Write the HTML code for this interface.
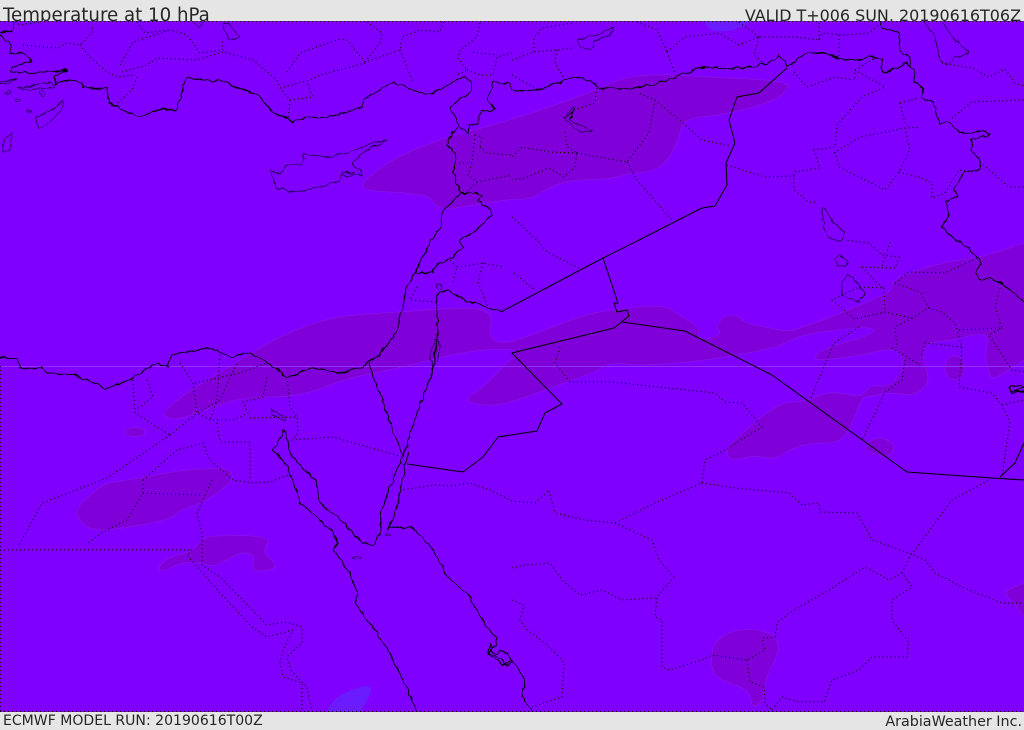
<!DOCTYPE html>
<html><head><meta charset="utf-8"><style>
html,body{margin:0;padding:0;width:1024px;height:729px;overflow:hidden;background:#e5e5e5}
.t{position:absolute;font-family:"DejaVu Sans","Liberation Sans",sans-serif;color:#262626;white-space:nowrap;line-height:1}
svg{position:absolute;left:0;top:0}
.d{fill:#7f00d9;stroke:#8a14e4;stroke-width:.7;stroke-linejoin:round}
.s{fill:none;stroke:#000;stroke-width:1;stroke-linejoin:round}
.h{fill:none;stroke:#1a0040;stroke-width:.7;stroke-linejoin:round}
.o{fill:none;stroke:#000;stroke-width:1.1;stroke-dasharray:1 3}
</style></head><body>
<div style="position:absolute;left:0;top:0;width:1024px;height:21px;overflow:hidden">
<div class="t" style="left:3px;top:7px;font-size:18.2px">Temperature at 10 hPa</div>
<div class="t" style="right:3px;top:8px;font-size:15.95px">VALID T+006 SUN, 20190616T06Z</div>
</div>
<div class="t" style="left:3px;top:714px;font-size:14.05px">ECMWF MODEL RUN: 20190616T00Z</div>
<div class="t" style="right:2px;top:715px;font-size:14.3px">ArabiaWeather Inc.</div>
<svg width="1024" height="729" viewBox="0 0 1024 729">
<defs>
<clipPath id="c"><rect x="0" y="21" width="1024" height="691"/></clipPath>
<filter id="wb" filterUnits="userSpaceOnUse" x="-10" y="0" width="1044" height="740" color-interpolation-filters="sRGB">
<feTurbulence type="fractalNoise" baseFrequency="0.14" numOctaves="2" seed="4" result="n"/>
<feDisplacementMap in="SourceGraphic" in2="n" scale="5" xChannelSelector="R" yChannelSelector="G"/>
</filter>
</defs>
<rect x="0" y="21" width="1024" height="691" fill="#7f00ff"/>
<!-- temperature patches -->
<g clip-path="url(#c)" id="patches">
<path class="d" d="M361 185L372 174 400 155 450 136 512 120 592 92 622 78 655 74 712 77 769 80 785 83 789 87 779 98 752 108 719 115 684 119 679 137 669 160 652 172 629 173 612 179 572 180 549 187 532 199 512 199 473 205 443 210 433 203 430 197 410 193 367 191Z"/>
<path class="d" d="M163 412L187 392 233 365 277 337 333 316 400 312 467 307 487 311 492 318 489 335 497 343 512 342 545 330 589 313 629 308 665 305 679 315 700 328 697 337 707 340 722 334 715 327 725 315 739 316 745 323 765 327 789 332 802 327 829 318 855 307 879 297 892 290 892 282 909 273 945 262 979 258 1024 243 1045 236 1045 347 1024 360 1012 368 992 380 989 373 985 355 989 337 979 333 955 340 925 343 922 357 930 380 922 390 909 396 893 392 865 397 862 398 855 417 842 443 812 443 792 448 775 460 755 455 732 461 725 453 732 442 779 402 805 402 829 391 855 396 864 395 870 385 889 387 902 373 904 355 892 348 862 355 819 361 814 357 822 350 842 343 865 337 878 329 859 327 799 335 779 347 712 360 640 366 612 362 595 372 545 390 512 402 490 406 470 403 467 398 480 390 500 370 517 354 512 348 460 352 400 368 347 378 300 397 240 397 197 413 177 420 165 417Z"/>
<ellipse class="d" cx="955" cy="368" rx="10" ry="12"/>
<path class="d" d="M865 447L870 441 879 437 890 441 895 447 889 457 870 453Z"/>
<ellipse class="d" cx="135" cy="432" rx="10" ry="4.5"/>
<path class="d" d="M75 512L83 501 100 487 110 482 130 480 180 470 227 468 232 473 232 482 203 503 180 510 170 520 100 532 83 525Z"/>
<path class="d" d="M202 537L233 535 272 537 262 552 275 562 275 569 257 572 252 567 255 555 243 552 230 558 213 567 200 562 180 563 163 572 157 568 170 556 192 553Z"/>
<path class="d" d="M711 672L712 647 725 633 752 628 775 635 780 650 765 680 764 700 752 709 750 690 725 682Z"/>
<path class="d" d="M1002 592L1024 583 1045 578 1045 640 1024 618 1015 603Z"/>
<path d="M323 722L333 697 367 684 373 690 362 710 350 722Z" fill="#6a1cff"/>
<path d="M704 10L704 21 709 30 725 32 740 28 752 21 760 10Z" fill="#6a1cff"/>
</g>
<line x1="0" y1="366.5" x2="1024" y2="366.5" stroke="#9230ff" stroke-width="1"/>
<!-- wobbly coasts and natural borders -->
<g filter="url(#wb)" clip-path="url(#c)">
<path class="s" d="M13 21L13 30 4 33 0 33M0 35L10 43 10 53 20 52 32 60 25 63 13 67 12 72 33 73 68 70 55 75 55 85 65 80 82 82 83 87 107 88 108 103 132 115 140 117 163 108 175 112 183 93 183 82 188 78 223 82 257 95 273 112 293 122 302 118 333 116 362 107 363 100 393 82 427 95 440 90 463 76 472 83 470 92 450 107 458 123 459 127 452 132 447 145 455 153 454 173 460 193 450 203 442 213 440 227 432 240 415 272 407 287 397 330 380 355 360 368 338 373 313 367 287 377 272 366 250 352 232 357 210 348 172 354 168 366 160 366 157 363 123 383 107 388 93 382 72 375 47 374 43 367 33 369 20 367 17 359 0 357"/>
<path class="s" d="M459 127L469 133 469 126 478 125 480 112 495 110 488 100 493 81 512 85 512 90 534 91 574 77 589 80 599 88 625 89 652 85 689 72 705 66 725 68 742 68 769 63 779 56 785 60 787 68 805 53 824 53 845 60 859 61 870 56 882 60 880 67 885 73 907 63 909 67"/>
<path class="s" d="M460 193L477 193 483 195 478 200 490 210 492 215 473 233 460 240 462 248 453 257 437 265 433 273 415 272"/>
<path class="s" d="M501 312L465 300 448 290 438 293 437 340 432 373 417 413 403 457 393 480 380 513 380 533 372 545 363 543 337 517 320 503 315 480 292 457 285 430 273 450 288 467 300 502 333 532 337 543 333 550 350 573 358 593 355 602 390 653 417 710"/>
<path class="s" d="M369 363L385 408 403 457M408 453L402 480 397 510 388 530M390 527L413 528 433 550 448 577 467 593 490 632 497 637 495 645 488 653 503 665 512 660 525 680 522 697 532 710"/>
<path class="s" d="M880 21L882 28 899 33 900 50 910 57 909 67 915 70 914 82 924 88 922 98 934 103 939 123 949 123 960 133 977 131 990 133 987 136 972 140 971 150 980 160 980 170 965 172 955 187 957 197 945 202 949 213 942 227 955 240 967 247 982 263 975 272 979 279 992 279 1009 288 1024 302"/>
<path class="h" d="M270 170L277 188 293 192 308 190 338 182 342 173 362 175 353 163 363 152 388 140 373 143 350 152 328 157 304 154 302 165 287 165 280 173Z"/>
<path class="h" d="M342 173L355 172 353 176 342 176ZM37 117L55 108 63 100 62 110 50 122 40 128 36 123ZM3 143L12 132 10 150 3 152ZM18 88L50 82 55 88 22 89ZM0 82L17 78 5 84 0 84ZM222 23L227 23 240 37 230 41ZM193 22L198 28 203 22M577 40L585 38 597 35 614 27 610 35 595 42 590 50 580 47ZM573 107L564 118 580 133 592 130 584 127 570 120 574 112ZM822 208L826 210 832 220 845 232 842 241 828 238 823 225ZM835 260L840 255 849 262 845 267 838 265ZM846 273L842 283 842 295 859 302 865 293 852 277ZM924 22L935 37 939 58 947 65 955 57 969 53 955 40 942 23M435 340L439 341 438 358 433 368 430 360ZM285 430L292 457M271 408L276 412 283 416 285 421 279 417 272 414Z"/>
<circle class="h" cx="439" cy="287" r="3"/><ellipse class="h" cx="8" cy="93" rx="2" ry="1.3"/><ellipse class="h" cx="42" cy="93" rx="2" ry="2.5"/><ellipse class="h" cx="29" cy="111" rx="2.5" ry="1"/><ellipse class="h" cx="18" cy="101" rx="2.5" ry="1.5"/><ellipse class="h" cx="357" cy="558" rx="3" ry="1.3"/><ellipse class="h" cx="388" cy="535" rx="3" ry="1.5"/>
<path class="s" stroke-width=".8" d="M490 644L488 652 502 660 507 666 512 662 508 653 500 650 496 654 491 650ZM1009 387L1020 385 1024 388 1012 391 1024 392 1012 393ZM572 112L566 118M574 110L570 120"/>
</g>
<!-- straight borders -->
<path class="s" d="M787 68L759 93 737 97 729 120 735 143 726 163 727 185 715 206 702 208 639 240 603 258 501 312"/>
<path class="s" d="M407 464L463 472 483 457 498 437 537 431 545 413 562 404 512 353 614 328 629 316 627 310 617 312 614 303 618 303 603 258"/>
<path class="s" d="M622 322L685 331 772 375 907 472 992 478 1024 480M1000 477L1015 463 1024 443"/>
<!-- dotted boundaries -->
<path class="o" d="M15 22L20 25 40 22M23 45L45 47 58 48 67 43 80 45 92 33 93 25M80 45L90 57 107 72 117 77 133 75M120 65L133 42 170 30 187 35 200 53 223 50 222 38M122 72L147 65 157 58 197 60 223 52 253 60 277 80 280 88 290 100 288 120M137 77L132 90 118 103M287 72L300 53 340 39 347 40 365 62 400 50 402 37 420 30 440 32 443 22M280 88L310 80 320 75 365 63M290 100L313 97 307 82M367 22L382 33 380 43 365 62M400 50L413 82M480 23L477 37 460 50 458 58 467 70 457 75M467 70L480 75 493 75 497 57 512 53M473 52L497 55M137 22L145 33 170 30"/>
<path class="o" d="M475 135L472 163 458 163M472 163L468 175 477 182 512 175M477 182L467 192M480 147L487 153 512 155M475 135L482 137 480 147M512 60L534 52 557 50 572 48M534 52L534 38 542 28 572 23M557 50L555 63 565 80M512 75L537 89M597 88L595 103 574 110M565 132L567 147 577 153 575 167 564 177 549 168 525 178 512 180M577 153L627 162 649 133 655 100 639 93M655 100L682 122 702 140 730 146M627 162L637 180 672 220M577 153L549 152 522 147 512 157M512 217L537 240 547 252 579 268M514 273L535 290M450 260L457 267 453 283M457 267L483 263 503 267M483 263L478 282 488 307M417 287L410 300 437 302"/>
<path class="o" d="M667 52L675 73M667 52L685 37 719 33 739 45 759 37 795 37 819 40 822 33 845 35 869 33 879 25M819 40L819 23M839 35L839 57M759 37L754 55 762 62M637 22L657 30 667 52M739 22L759 37M794 72L807 87 835 77 855 80 855 70 875 58M855 70L885 87 862 97 837 125 835 147 814 150 820 168 794 172 794 190 809 202 817 202M727 165L765 177 794 176M834 153L860 137 905 128 920 127M905 128L910 150 899 172 885 190 839 167 835 152M899 172L919 177 932 183 932 198 945 193 959 170 972 172M900 103L919 98M900 103L905 123M952 118L972 102 1024 100M980 162L1009 187 1024 187M942 63L972 68 989 77 1005 69 1015 83 1024 86"/>
<path class="o" d="M895 283L920 292 929 308 912 318 885 312 855 319 832 300 859 287 884 288 885 312M929 308L942 312 955 323 962 347 959 387 992 393 1002 405 1010 422 1002 477M1002 405L1024 400M922 355L925 343 962 347M892 348L920 365M912 318L895 327 897 347M959 330L1002 328 995 307 1000 288M1002 328L989 335 1012 370 1024 372M905 360L902 380 885 392 862 440M859 327L834 343 810 400M862 267L877 283 884 288M862 267L895 268 899 257 882 255 869 243 845 240M890 242L882 267M895 283L909 272 945 273 979 257"/>
<path class="o" d="M560 347L555 363 570 382 612 382 659 387 715 393 725 402 742 403 762 427 725 450 705 460 702 483 655 503 615 523 585 520 555 513 549 490 535 503 512 501 490 490 470 483 450 486 435 485 402 490M615 523L652 540 659 560 674 577 657 597 655 617 662 620 662 667 669 670 702 660 712 655 747 660 765 650 762 638 775 637 777 623 789 613 829 590 865 567 889 580 902 573 912 587 892 600 892 620 909 643 907 657 872 657 859 670 832 680 824 702 799 702 782 697 772 710M747 660L750 682 764 687 765 703 772 710M702 483L735 488 789 493 802 505 819 503 820 512 857 513 872 540 909 553 925 560 935 573 962 587 1002 603 1022 603M909 558L952 500 989 480M902 573L909 558M512 568L525 565 550 563 562 580 580 595 602 590 622 600 657 598M512 600L524 605 520 620 527 630 545 643 564 662 562 697 532 707"/>
<path class="o" d="M133 380L135 413 170 435M147 380L153 397 135 410M170 435L107 478 42 503 18 547M170 435L197 413 220 400 237 363M180 363L193 383 197 413 210 420 233 420 248 413 243 402 263 397 267 377M220 355L217 400 210 420M217 423L220 442 250 442 250 480M250 418L297 417 298 433 292 440 333 437 403 457M287 377L290 407 297 417M195 383L240 373 267 363M143 480L177 450 203 443 210 460 233 480 253 483 270 482 288 475M143 480L143 493 127 520 103 532 88 543M143 493L200 495M212 480L197 513 202 533 202 565 220 577 233 590 257 615 267 625 287 622 302 627 302 643 287 657 292 672 307 687 312 710M0 550L192 550 187 555 200 570 220 593 252 627 267 637 293 630 283 650 280 663 283 677 302 683 302 710"/>
<path fill="none" stroke="#000" stroke-width="1" stroke-dasharray="1 3" d="M.5 366V712M0 21.5H1024M0 711.5H1024"/>
</svg>
<script>
(function(){var ps=document.querySelectorAll('#patches path');
for(var i=0;i<ps.length;i++){var n=ps[i].getAttribute('d').match(/-?\d+(\.\d+)?/g).map(Number),p=[];
for(var j=0;j<n.length;j+=2)p.push([n[j],n[j+1]]);
var L=p.length,m=function(a,b){return ((a[0]+b[0])/2)+' '+((a[1]+b[1])/2)},s='M'+m(p[L-1],p[0]);
for(j=0;j<L;j++)s+='Q'+p[j][0]+' '+p[j][1]+' '+m(p[j],p[(j+1)%L]);
ps[i].setAttribute('d',s+'Z');}})();
</script>
</body></html>
